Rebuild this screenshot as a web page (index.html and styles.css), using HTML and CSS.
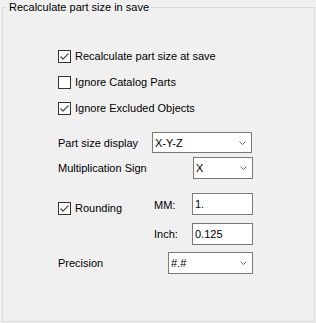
FILE: index.html
```html
<!DOCTYPE html>
<html lang="en">
<head>
    <meta charset="UTF-8">
    <meta name="viewport" content="width=device-width, initial-scale=1.0">
    <title>Recalculate part size in save</title>
    <link rel="stylesheet" href="styles.css">
</head>
<body>
    <fieldset class="group">
        <legend>Recalculate part size in save</legend>
        <div class="checks">
            <label class="check">
                <span class="box"><svg viewBox="0 0 11 11" width="11" height="11"><polyline points="1.5,5.5 4,8 9.5,2.5" /></svg></span>
                Recalculate part size at save
            </label>
            <label class="check">
                <span class="box"></span>
                Ignore Catalog Parts
            </label>
            <label class="check">
                <span class="box"><svg viewBox="0 0 11 11" width="11" height="11"><polyline points="1.5,5.5 4,8 9.5,2.5" /></svg></span>
                Ignore Excluded Objects
            </label>
        </div>

        <div class="field field-size">
            <span class="field-label">Part size display</span>
            <div class="combo">X-Y-Z<svg class="arrow" viewBox="0 0 7 4" width="7" height="4"><polyline points="0.5,0.5 3.5,3.5 6.5,0.5" /></svg></div>
        </div>
        <div class="field field-sign">
            <span class="field-label">Multiplication Sign</span>
            <div class="combo">X<svg class="arrow" viewBox="0 0 7 4" width="7" height="4"><polyline points="0.5,0.5 3.5,3.5 6.5,0.5" /></svg></div>
        </div>

        <div class="rounding">
            <label class="check round-check">
                <span class="box"><svg viewBox="0 0 11 11" width="11" height="11"><polyline points="1.5,5.5 4,8 9.5,2.5" /></svg></span>
                Rounding
            </label>
            <span class="unit unit-mm">MM:</span>
            <input type="text" class="textbox" value="1.">
            <span></span>
            <span class="unit">Inch:</span>
            <input type="text" class="textbox" value="0.125">
        </div>

        <div class="field field-precision">
            <span class="field-label">Precision</span>
            <div class="combo">#.#<svg class="arrow" viewBox="0 0 7 4" width="7" height="4"><polyline points="0.5,0.5 3.5,3.5 6.5,0.5" /></svg></div>
        </div>
    </fieldset>
</body>
</html>
```

FILE: styles.css
```css
body {
    margin: 0;
    background-color: #f0f0f0;
    font-family: 'Liberation Sans', Arial, sans-serif;
    font-size: 11px;
    color: #000;
}
.group {
    box-sizing: border-box;
    width: 313px;
    height: 322px;
    margin: 0 0 0 2px;
    padding: 0;
    border: 1px solid #dcdcdc;
}
.group legend {
    margin-left: 4px;
    padding: 0 2px;
    line-height: 15px;
}
.checks {
    margin-top: 35px;
    padding-left: 55px;
}
.check {
    display: flex;
    align-items: center;
    height: 13px;
    line-height: 13px;
    margin-bottom: 13px;
}
.checks .check:last-child {
    margin-bottom: 0;
}
.box {
    box-sizing: border-box;
    width: 13px;
    height: 13px;
    margin-right: 4px;
    border: 1px solid #333;
    background-color: #fff;
    display: flex;
}
.box polyline {
    fill: none;
    stroke: #555;
    stroke-width: 1.3;
}
.field {
    display: flex;
    align-items: center;
    padding-left: 55px;
}
.field-size {
    margin-top: 17px;
}
.field-sign {
    margin-top: 4px;
}
.field-precision {
    margin-top: 7px;
}
.field-size .field-label {
    width: 94px;
}
.field-sign .field-label {
    width: 135px;
}
.field-precision .field-label {
    width: 110px;
}
.combo {
    box-sizing: border-box;
    height: 22px;
    padding: 0 5px 0 2px;
    border: 1px solid #7a7a7a;
    background-color: #fff;
    display: flex;
    align-items: center;
    justify-content: space-between;
}
.field-size .combo {
    width: 100px;
    height: 21px;
}
.field-sign .combo {
    width: 60px;
}
.field-precision .combo {
    width: 85px;
}
.arrow polyline {
    fill: none;
    stroke: #707070;
    stroke-width: 1;
}
.rounding {
    display: grid;
    grid-template-columns: 96px 38px 61px;
    row-gap: 8px;
    align-items: center;
    margin-top: 13px;
    padding-left: 55px;
}
.round-check {
    margin: 10px 0 0;
    align-self: start;
}
.unit {
    line-height: 13px;
}
.unit-mm {
    margin-top: 7px;
    align-self: start;
}
.textbox {
    box-sizing: border-box;
    width: 61px;
    height: 22px;
    margin: 0;
    padding: 0 2px;
    border: 1px solid #7a7a7a;
    background-color: #fff;
    font-family: inherit;
    font-size: 11px;
    color: #000;
    outline: none;
}
```
